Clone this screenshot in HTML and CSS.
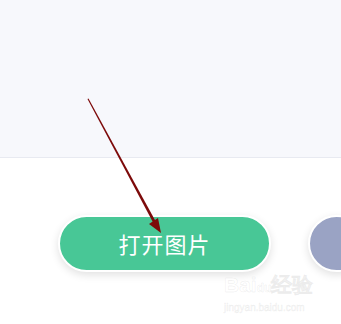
FILE: index.html
```html
<!DOCTYPE html>
<html>
<head>
<meta charset="utf-8">
<link rel="stylesheet" href="styles.css">
</head>
<body>
<div class="page">
  <div class="top"></div>
  <div class="actions">
    <button class="btn-open">打开图片</button>
    <div class="circle"></div>
  </div>
  <svg class="arrow" width="341" height="324" viewBox="0 0 341 324">
    <polygon points="87.5,99 88.5,98.6 156,222 153.6,223.4" fill="#7d0a0a"/>
    <polygon points="161,233 149,224 158,218" fill="#7d0a0a"/>
  </svg>
  <div class="watermark">
    <div class="wm-logo">Bai<span class="wm-du">du</span>经验</div>
    <div class="wm-url">jingyan.baidu.com</div>
  </div>
</div>
</body>
</html>
```
FILE: styles.css
```css
html, body {
  margin: 0;
  padding: 0;
  background: #ffffff;
}
.page {
  position: relative;
  width: 341px;
  height: 324px;
  overflow: hidden;
  font-family: "Noto Sans CJK SC", "Noto Sans", sans-serif;
}
.top {
  height: 157px;
  background: #f7f8fc;
  border-bottom: 1px solid #e8eaf1;
}
.actions {
  display: flex;
  align-items: center;
  gap: 37px;
  padding-top: 57px;
  padding-left: 58px;
}
.btn-open {
  flex: none;
  width: 213px;
  height: 57px;
  border-radius: 29px;
  border: 2px solid #ffffff;
  background: #48c796;
  color: #ffffff;
  font-family: "Noto Sans CJK SC", sans-serif;
  font-size: 22px;
  letter-spacing: 1px;
  box-shadow: 0 3px 8px rgba(0, 0, 0, 0.12);
  padding: 0 0 2px 0;
}
.circle {
  flex: none;
  width: 53px;
  height: 53px;
  border-radius: 50%;
  border: 2px solid #ffffff;
  background: #9aa3c4;
  box-shadow: 0 3px 8px rgba(0, 0, 0, 0.12);
}
.arrow {
  position: absolute;
  left: 0;
  top: 0;
  pointer-events: none;
}
.watermark {
  position: absolute;
  left: 224px;
  top: 273px;
  color: rgba(255, 255, 255, 0.95);
  -webkit-text-stroke: 0.5px rgba(170, 170, 170, 0.22);
  font-family: "Liberation Sans", sans-serif;
}
.wm-logo {
  font-size: 21px;
  font-weight: bold;
  line-height: 24px;
}
.wm-du {
  font-size: 12px;
}
.wm-url {
  font-size: 10px;
  line-height: 12px;
  margin-top: 2px;
  color: rgba(255, 255, 255, 0.95);
}
```
